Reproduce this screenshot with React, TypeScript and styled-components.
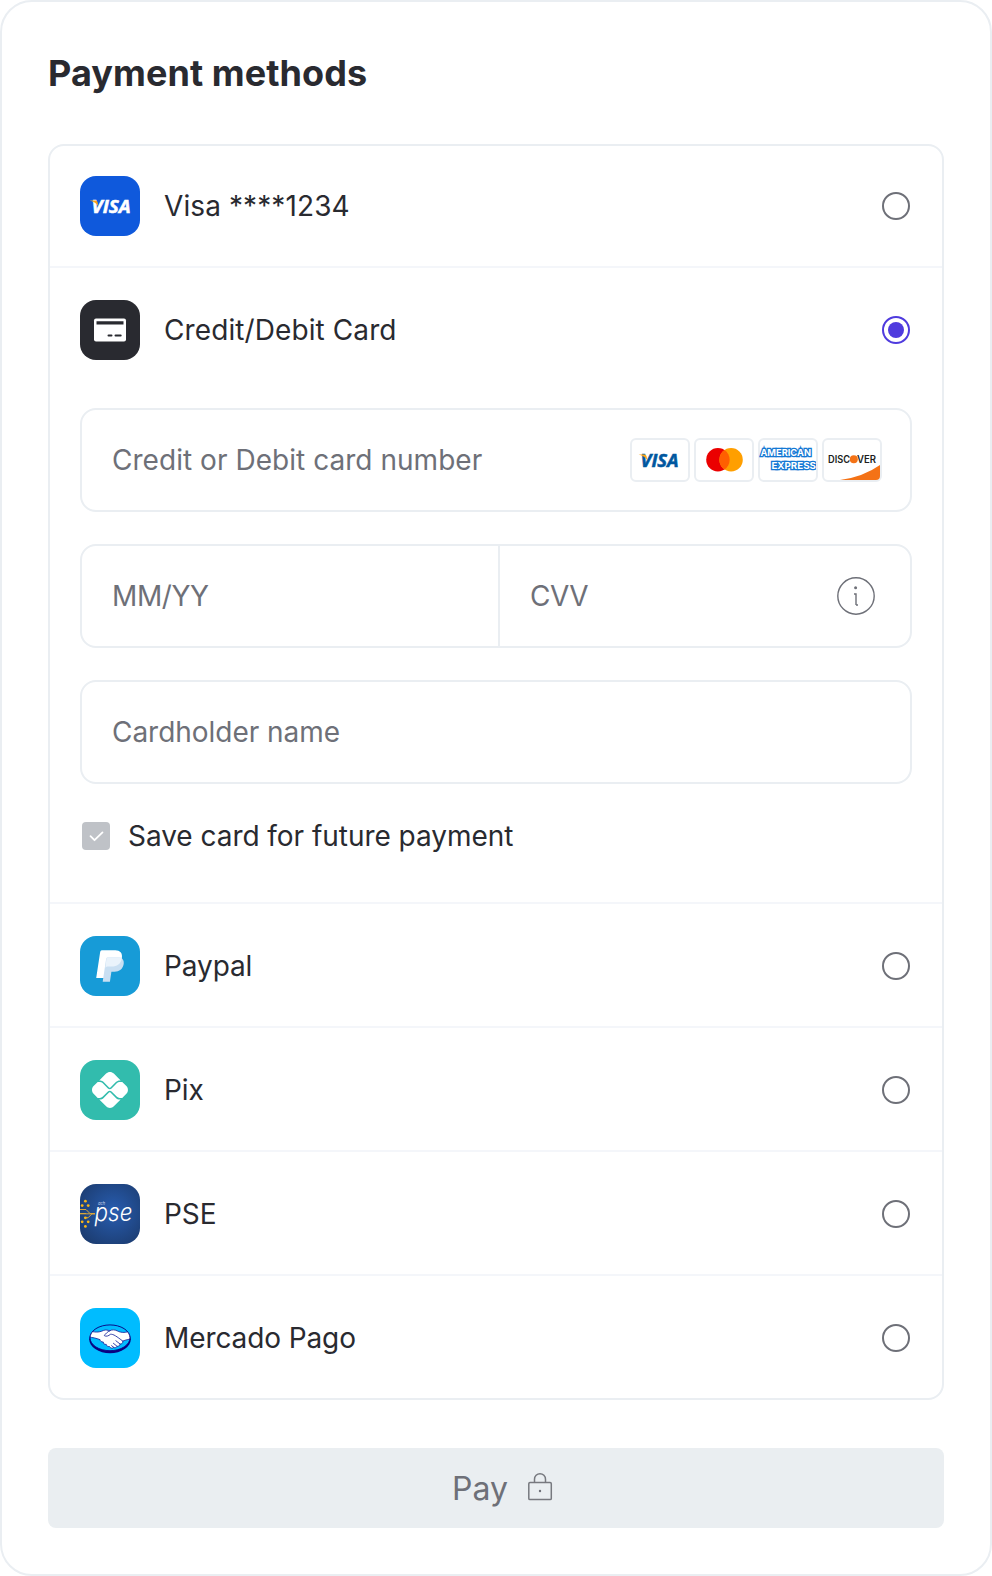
import React from "react";
import styled, { createGlobalStyle } from "styled-components";
import { FaPix } from "react-icons/fa6";

const GlobalStyle = createGlobalStyle`
  * { box-sizing: border-box; }
  body { margin: 0; background: #fff; font-family: Inter, "Liberation Sans", sans-serif; }
`;

const Card = styled.main`
  width: 992px;
  height: 1576px;
  padding: 46px;
  display: flex;
  flex-direction: column;
  background: #fff;
  border: 2px solid #eaeef2;
  border-radius: 32px;
  color: #292a30;
`;

const Title = styled.h1`
  margin: 0 0 48px;
  height: 48px;
  line-height: 50px;
  font-size: 36px;
  font-weight: 700;
  letter-spacing: 0.07px;
`;

const Methods = styled.section`
  border: 2px solid #eaeef2;
  border-radius: 16px;
`;

const Method = styled.div<{ $first?: boolean }>`
  padding: ${(p) => (p.$first ? 30 : 32)}px 30px 30px;
  border-top: ${(p) => (p.$first ? "none" : "2px solid #f4f6fa")};
`;

const MethodHead = styled.label`
  display: flex;
  align-items: center;
  height: 60px;
`;

const Tile = styled.svg`
  display: block;
  flex: none;
  width: 60px;
  height: 60px;
  margin-right: 24px;
  border-radius: 16px;
`;

const MethodName = styled.span<{ $wide?: boolean }>`
  flex: 1;
  font-size: 28px;
  font-weight: 400;
  letter-spacing: ${(p) => (p.$wide ? 0.1 : -0.1)}px;
  line-height: 40px;
`;

const Radio = styled.span<{ $on?: boolean }>`
  width: 28px;
  height: 28px;
  margin-right: 2px;
  display: grid;
  place-items: center;
  border: 2px solid ${(p) => (p.$on ? "#4f3bde" : "#6e7078")};
  border-radius: 50%;
  &::after {
    content: "";
    width: 16px;
    height: 16px;
    border-radius: 50%;
    background: ${(p) => (p.$on ? "#4f3bde" : "transparent")};
  }
`;

const Form = styled.div`
  display: flex;
  flex-direction: column;
  gap: 32px;
  padding-top: 48px;
`;

const FieldRow = styled.div`
  display: flex;
  height: 104px;
  border: 2px solid #eaeef2;
  border-radius: 16px;
`;

const Field = styled.div<{ $width?: number; $right?: number; $track?: number }>`
  display: flex;
  align-items: center;
  justify-content: space-between;
  flex: ${(p) => (p.$width ? `0 0 ${p.$width}px` : "1")};
  padding: 0 ${(p) => p.$right ?? 30}px 0 30px;
  color: #6e7078;
  font-size: 28px;
  font-weight: 400;
  letter-spacing: ${(p) => p.$track ?? 0}px;
  line-height: 40px;
  & + & { border-left: 2px solid #eaeef2; }
`;

const Brands = styled.div`
  display: flex;
  gap: 4px;
  letter-spacing: 0;
`;

const Brand = styled.svg`
  display: block;
  width: 60px;
  height: 44px;
`;

const InfoIcon = styled.svg`
  display: block;
  width: 40px;
  height: 40px;
`;

const SaveRow = styled.label`
  display: flex;
  align-items: center;
  height: 40px;
  margin: 0 0 16px 2px;
  gap: 18px;
  font-size: 28px;
  font-weight: 400;
  letter-spacing: -0.04px;
`;

const CheckBox = styled.svg`
  display: block;
  width: 28px;
  height: 28px;
`;

const PayButton = styled.button`
  display: flex;
  align-items: center;
  justify-content: center;
  gap: 19px;
  height: 80px;
  margin-top: 48px;
  padding: 2px 0 0 13px;
  border: 0;
  border-radius: 8px;
  background: #eaeef1;
  color: #6e7078;
  font: 400 32px/48px Inter, "Liberation Sans", sans-serif;
`;

const LockIcon = styled.svg`
  display: block;
  width: 26px;
  height: 30px;
  margin-top: -4px;
`;

const VisaMark = ({ x, y, w, size, fill }: { x: number; y: number; w: number; size: number; fill: string }) => (
  <>
    <text x={x} y={y} textLength={w} lengthAdjust="spacingAndGlyphs" fontFamily="'Open Sans', 'Noto Sans', sans-serif" fontWeight="700" fontStyle="italic" fontSize={size} fill={fill} stroke={fill} strokeWidth=".5">
      VISA
    </text>
    <path d={`M${x - 2} ${y - size * 0.73}h6q1.5 0 1.9 1.5l.9 4.6q-2.3-4.6-8.8-6.1z`} fill="#f9a51a" />
  </>
);

const VisaTile = () => (
  <Tile viewBox="0 0 60 60">
    <rect width="60" height="60" fill="#0f59dc" />
    <VisaMark x={11.6} y={36.8} w={39} size={17} fill="#fff" />
  </Tile>
);

const CardTile = () => (
  <Tile viewBox="0 0 60 60">
    <rect width="60" height="60" fill="#292a30" />
    <rect x="14" y="18.6" width="32" height="23" rx="2" fill="#fff" />
    <path d="M16.5 21.3h27v3.3h-27z" fill="#292a30" />
    <path d="M28.5 35.5h3M35.5 35.5h5.2" stroke="#292a30" strokeWidth="2" strokeLinecap="round" />
  </Tile>
);

const PaypalTile = () => (
  <Tile viewBox="0 0 60 60">
    <rect width="60" height="60" fill="#179bd7" />
    <path d="M21.7 14.2h13.6c4.7 0 7.4 3 6.6 7.4-1 5.8-4.8 8.8-10.4 8.8h-4.2l-2 11.7h-9.1l4-26.4q.3-1.5 1.5-1.5z" fill="#fff" />
    <path d="M28 21.3h10.2c3.9 0 6.2 2.9 5.5 6.8-.9 5-4.3 7.7-9.2 7.7h-3.1l-1.5 9.9h-7.2l3.4-22.6q.3-1.8 1.9-1.8z" fill="#c9dff2" />
    <path d="M28 21.3h10.2q2.2 0 3.7 1.1c-1.1 5.4-4.8 8-10.4 8h-4.2q-1.6 0-1.9 1.5l1-8.8q.3-1.8 1.6-1.8z" fill="#eaf3fb" />
  </Tile>
);

const PixTile = () => (
  <Tile viewBox="0 0 60 60">
    <rect width="60" height="60" fill="#32bcad" />
    <FaPix x={12} y={12} size={36} color="#fff" />
  </Tile>
);

const PseTile = () => (
  <Tile viewBox="0 0 60 60">
    <defs>
      <radialGradient id="pse" cx=".55" cy=".45" r=".65">
        <stop offset="0" stopColor="#285db0" />
        <stop offset="1" stopColor="#1c3d72" />
      </radialGradient>
    </defs>
    <rect width="60" height="60" fill="url(#pse)" />
    <path d="M0 25.5h6l4 4h5M0 29.5h6M0 29.8h15M15 29.8h-3l-4 4H4" fill="none" stroke="#dba63a" strokeWidth="1" />
    <g fill="#f8b617">
      <circle cx="5.4" cy="17.2" r="1.4" />
      <circle cx="2.2" cy="21.6" r="1.4" />
      <circle cx="8.2" cy="21.6" r="1.4" />
      <circle cx="5.4" cy="33.8" r="1.4" />
      <circle cx="2.2" cy="37.8" r="1.4" />
      <circle cx="8.2" cy="37.8" r="1.4" />
      <circle cx="5.4" cy="42.4" r="1.4" />
    </g>
    <text transform="translate(14.6 36.6) scale(1.18 1)" textLength="32" lengthAdjust="spacingAndGlyphs" fontFamily="Inter, sans-serif" fontStyle="italic" fontWeight="300" fontSize="25" fill="#fff">pse</text>
    <text x="18" y="21.3" textLength="7.2" lengthAdjust="spacingAndGlyphs" fontFamily="'Open Sans', sans-serif" fontStyle="italic" fontSize="6" fill="#c7d5ed">ach</text>
  </Tile>
);

const MercadoTile = () => (
  <Tile viewBox="0 0 60 60">
    <defs>
      <clipPath id="oval"><ellipse cx="30" cy="29.8" rx="20" ry="13" /></clipPath>
    </defs>
    <rect width="60" height="60" fill="#00bcff" />
    <ellipse cx="30" cy="31.2" rx="20.8" ry="14" fill="#0a0080" />
    <ellipse cx="30" cy="29.8" rx="20" ry="12.9" fill="#00bcff" />
    <g clipPath="url(#oval)" stroke="#2330a0" strokeWidth=".9" strokeLinejoin="round" strokeLinecap="round">
      <path d="M9 22.6c5 1.8 9.5 2.2 14.6-.2 2.3-.8 4.2-.2 6.1.4 2.5-1.3 4.9-1.2 7.4 0 4.5 2.4 9 2 14.5-.3V31c-3 .2-6 .9-8.8 2.1.2 2-1 3-2.7 2.9-.3 1.7-1.4 2.5-3 2.3-.7 1.3-2 1.8-3.3 1.1-1.2 1.2-3.6.9-4.3-.9-2 .3-3.2-.7-3.2-2.1-2 .3-3.2-.9-3-2.4-2 .1-3.2-.9-3.2-2.3-4-1.6-7.2-2.2-11.3-2.6z" fill="#fff" />
      <path d="M29.7 22.8c-2.3 1-4.4 3.2-5.4 4.8 1.8 1.3 4.4.3 6.1-1.3 3-.4 6.3 2.2 12.4 6.8M40.1 36l-4.2-3.2M37.1 38.3l-3.7-3M33.8 39.4l-2.2-1.7" fill="none" />
    </g>
    <ellipse cx="30" cy="29.8" rx="20" ry="12.9" fill="none" stroke="#0a0080" strokeWidth=".9" />
  </Tile>
);

const Frame = () => <rect x="1" y="1" width="58" height="42" rx="5" fill="none" stroke="#eaeef2" strokeWidth="2" />;

const CardBrands = () => (
  <Brands>
    <Brand viewBox="0 0 60 44">
      <Frame />
      <VisaMark x={10.6} y={28.8} w={38} size={17} fill="#00579f" />
    </Brand>
    <Brand viewBox="0 0 60 44">
      <Frame />
      <circle cx="23.9" cy="21.7" r="11.7" fill="#eb0000" />
      <circle cx="37.1" cy="21.7" r="11.7" fill="#ff9f00" />
      <path d="M30.5 12a11.7 11.7 0 0 1 0 19.4 11.7 11.7 0 0 1 0-19.4z" fill="#ff5f00" />
    </Brand>
    <Brand viewBox="0 0 60 44">
      <Frame />
      <defs><clipPath id="amex"><rect x="1" y="2" width="57" height="40" rx="4" /></clipPath></defs>
      <g clipPath="url(#amex)" fontFamily="Inter, sans-serif" fontWeight="700" fontSize="9.4" fill="#fff" stroke="#1478d4" strokeWidth="2.6" paintOrder="stroke">
        <text x="2.4" y="18.2" textLength="50.6" lengthAdjust="spacingAndGlyphs">AMERICAN</text>
        <text x="13.4" y="30.6" textLength="44.6" lengthAdjust="spacingAndGlyphs">EXPRESS</text>
      </g>
    </Brand>
    <Brand viewBox="0 0 60 44">
      <Frame />
      <path d="M18 42Q41 39 58 27v11q0 4-4 4z" fill="#f47216" />
      <g fontFamily="Inter, sans-serif" fontWeight="600" fontSize="9.8" fill="#201d1c">
        <text x="6" y="24.9" textLength="22" lengthAdjust="spacingAndGlyphs">DISC</text>
        <text x="35" y="24.9" textLength="19" lengthAdjust="spacingAndGlyphs">VER</text>
      </g>
      <circle cx="31.8" cy="21.2" r="4" fill="#f47216" />
    </Brand>
  </Brands>
);

export default function App() {
  return (
    <>
      <GlobalStyle />
      <Card>
        <Title>Payment methods</Title>
        <Methods>
          <Method $first>
            <MethodHead><VisaTile /><MethodName $wide>Visa ****1234</MethodName><Radio /></MethodHead>
          </Method>
          <Method>
            <MethodHead><CardTile /><MethodName $wide>Credit/Debit Card</MethodName><Radio $on /></MethodHead>
            <Form>
              <FieldRow>
                <Field $right={28} $track={0.04}>Credit or Debit card number<CardBrands /></Field>
              </FieldRow>
              <FieldRow>
                <Field $width={416} $track={-0.4}>MM/YY</Field>
                <Field $right={34} $track={-0.5}>
                  CVV
                  <InfoIcon viewBox="0 0 40 40" fill="none" stroke="#6e7078" strokeWidth="1.4">
                    <circle cx="20" cy="20" r="18.2" />
                    <path d="M18 18h2v11M20 29h2" />
                    <circle cx="19.6" cy="11.8" r="1.5" fill="#6e7078" stroke="none" />
                  </InfoIcon>
                </Field>
              </FieldRow>
              <FieldRow><Field $track={-0.03}>Cardholder name</Field></FieldRow>
              <SaveRow>
                <CheckBox viewBox="0 0 28 28">
                  <rect width="28" height="28" rx="4" fill="#bfc2c7" />
                  <path d="M8.5 14.2l4 4 8-7.8" fill="none" stroke="#fff" strokeWidth="1.8" strokeLinecap="round" strokeLinejoin="round" />
                </CheckBox>
                Save card for future payment
              </SaveRow>
            </Form>
          </Method>
          <Method><MethodHead><PaypalTile /><MethodName>Paypal</MethodName><Radio /></MethodHead></Method>
          <Method><MethodHead><PixTile /><MethodName>Pix</MethodName><Radio /></MethodHead></Method>
          <Method><MethodHead><PseTile /><MethodName>PSE</MethodName><Radio /></MethodHead></Method>
          <Method><MethodHead><MercadoTile /><MethodName>Mercado Pago</MethodName><Radio /></MethodHead></Method>
        </Methods>
        <PayButton>
          Pay
          <LockIcon viewBox="0 0 26 30" fill="none" stroke="#77797f" strokeWidth="1.5">
            <rect x="1.8" y="10.6" width="22.5" height="17" rx="1.2" />
            <path d="M7.5 10.6V7.2a5.5 5.5 0 0 1 11 0v3.4" />
            <circle cx="13" cy="19" r="1.2" fill="#6e7078" stroke="none" />
          </LockIcon>
        </PayButton>
      </Card>
    </>
  );
}
